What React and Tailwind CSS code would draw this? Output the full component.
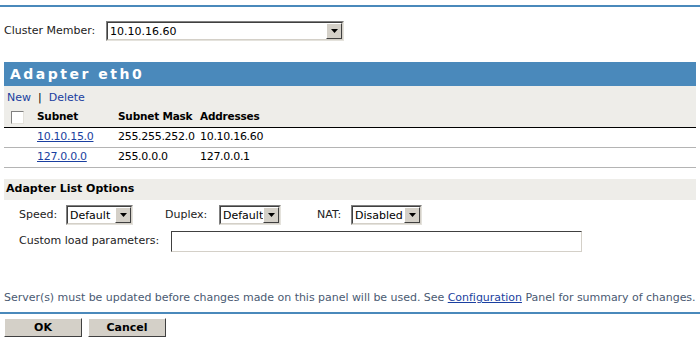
const FONT = { fontFamily: '"DejaVu Sans", Verdana, sans-serif' };

function DropArrow() {
  return (
    <div className="flex h-[16px] w-[16px] items-center justify-center border border-t-[#ffffff] border-l-[#ffffff] border-b-[#404040] border-r-[#404040] bg-[#d4d0c8]">
      <svg width="7" height="4" viewBox="0 0 7 4">
        <path d="M0 0h7L3.5 4z" fill="#000" />
      </svg>
    </div>
  );
}

function Select({ value, width }) {
  return (
    <div
      className="flex h-[20px] items-center justify-between border border-t-[#808080] border-l-[#808080] border-b-[#e4e2dc] border-r-[#e4e2dc] bg-white"
      style={{ width }}
    >
      <div className="flex h-full flex-1 items-center justify-between border border-t-[#404040] border-l-[#404040] border-b-[#d4d0c8] border-r-[#d4d0c8] pl-[2px]">
        <span className="text-[11px] leading-none text-black">{value}</span>
        <DropArrow />
      </div>
    </div>
  );
}

function Button({ children }) {
  return (
    <button
      type="button"
      className="h-[19px] w-[78px] border border-t-[#ffffff] border-l-[#ffffff] border-b-[#404040] border-r-[#404040] bg-[#d4d0c8] text-[11px] font-bold leading-none text-black"
    >
      {children}
    </button>
  );
}

const rows = [
  { subnet: "10.10.15.0", mask: "255.255.252.0", addr: "10.10.16.60" },
  { subnet: "127.0.0.0", mask: "255.0.0.0", addr: "127.0.0.1" },
];

export default function App() {
  return (
    <div className="h-[340px] w-[700px] overflow-hidden bg-white text-[11px] text-black" style={FONT}>
      <div className="mt-[5px] h-[2px] bg-[#4a89bb]" />

      <div className="mt-[14px] flex items-center pl-[4px]">
        <span className="w-[102px] text-[#222]">Cluster Member:</span>
        <Select value="10.10.16.60" width="238px" />
      </div>

      <div className="mx-[4px] mt-[21px]">
        <div className="flex h-[24px] items-center bg-[#4a89bb] pl-[6px]">
          <span className="text-[14px] font-bold tracking-[2.5px] text-white">Adapter eth0</span>
        </div>
        <div className="bg-[#eeede9] pt-[4px]">
          <div className="flex h-[17px] items-center pl-[3px] text-[#1a3fa0]">
            <span>New</span>
            <span className="mx-[7px] text-black">|</span>
            <span>Delete</span>
          </div>
          <div className="flex h-[21px] items-center border-b border-black text-[10.5px] font-bold tracking-[-0.2px]">
            <div className="w-[33px] pl-[7px]">
              <div className="h-[13px] w-[13px] border border-t-[#808080] border-l-[#808080] border-b-[#e4e2dc] border-r-[#e4e2dc] bg-white" />
            </div>
            <div className="w-[81px]">Subnet</div>
            <div className="w-[82px]">Subnet Mask</div>
            <div>Addresses</div>
          </div>
        </div>
        {rows.map((r) => (
          <div key={r.subnet} className="flex h-[20px] items-center border-b border-[#b4b4b4] tracking-[-0.3px]">
            <div className="w-[33px]" />
            <div className="w-[81px] text-[#1a3fa0] underline">{r.subnet}</div>
            <div className="w-[82px]">{r.mask}</div>
            <div>{r.addr}</div>
          </div>
        ))}

        <div className="mt-[11px] flex h-[21px] items-center bg-[#eeede9] pl-[2px] font-bold">
          Adapter List Options
        </div>
        <div className="mt-[5px] flex items-center pl-[15px] text-[#222]">
          <span className="w-[47px]">Speed:</span>
          <Select value="Default" width="67px" />
          <span className="ml-[32px] w-[54px]">Duplex:</span>
          <Select value="Default" width="62px" />
          <span className="ml-[36px] w-[34px]">NAT:</span>
          <Select value="Disabled" width="71px" />
        </div>
        <div className="mt-[6px] flex items-center pl-[15px] text-[#222]">
          <span className="w-[152px]">Custom load parameters:</span>
          <div className="h-[21px] w-[411px] border border-t-[#404040] border-l-[#404040] border-b-[#d4d0c8] border-r-[#d4d0c8] bg-white" />
        </div>
      </div>

      <div className="mt-[38px] pl-[4px] text-[#4a5a72] tracking-[-0.03px]">
        Server(s) must be updated before changes made on this panel will be used. See{" "}
        <span className="text-[#1a3fa0] underline">Configuration</span> Panel for summary of changes.
      </div>
      <div className="mt-[5px] h-[2px] bg-[#4a89bb]" />
      <div className="mt-[4px] flex gap-[6px] pl-[4px]">
        <Button>OK</Button>
        <Button>Cancel</Button>
      </div>
    </div>
  );
}
